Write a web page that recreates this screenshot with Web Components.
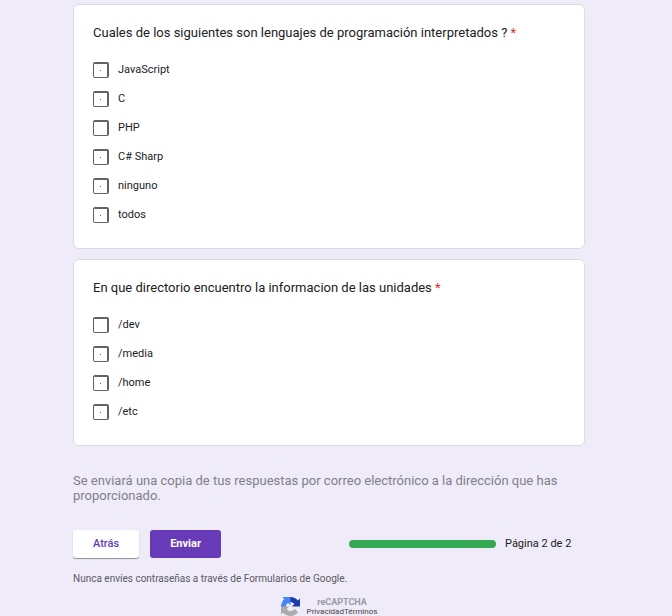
<!DOCTYPE html>
<html lang="es">
<head>
<meta charset="utf-8">
<title>Formulario</title>
<style>
body{margin:0;background:#efebf8;font-family:Roboto,"Liberation Sans",sans-serif;color:#202124}
</style>
</head>
<body>
<form-page>
<question-card label="Cuales de los siguientes son lenguajes de programación interpretados ?">
<check-option dot label="JavaScript"></check-option>
<check-option dot label="C"></check-option>
<check-option label="PHP"></check-option>
<check-option dot label="C# Sharp"></check-option>
<check-option dot label="ninguno"></check-option>
<check-option dot label="todos"></check-option>
</question-card>
<question-card label="En que directorio encuentro la informacion de las unidades">
<check-option label="/dev"></check-option>
<check-option dot label="/media"></check-option>
<check-option dot label="/home"></check-option>
<check-option dot label="/etc"></check-option>
</question-card>
<form-footer></form-footer>
</form-page>
<script>
const define = (name, html, setup) => customElements.define(name, class extends HTMLElement {
  connectedCallback() {
    if (this.shadowRoot) return;
    const root = this.attachShadow({ mode: 'open' });
    root.innerHTML = html;
    if (setup) setup(this, root);
  }
});

define('form-page', `
<style>
:host{display:block;box-sizing:border-box;padding:4px 14px 0 0}
main{max-width:512px;margin:0 auto;display:flex;flex-direction:column;gap:10px}
</style>
<main><slot></slot></main>`);

define('question-card', `
<style>
:host{display:block;background:#fff;border:1px solid #dadce0;border-radius:6px;padding:18px 19px 19px}
fieldset{border:0;margin:0;padding:0;min-width:0}
legend{padding:0;margin:0 0 12px;font-size:13px;line-height:20px}
legend span:last-child{color:#d93025}
</style>
<fieldset><legend><span class="title"></span> <span>*</span></legend><slot></slot></fieldset>`,
(el, root) => { root.querySelector('.title').textContent = el.getAttribute('label'); });

define('check-option', `
<style>
:host{display:block}
label{display:flex;align-items:center;gap:9px;height:29px;font-size:11px;line-height:16px}
input{appearance:none;box-sizing:border-box;flex:none;width:16px;height:16px;margin:0;border:solid #5f6368;border-width:2px 2px 1px 1px;border-radius:2px;display:grid;place-items:center}
:host([dot]) input::before{content:"";width:1px;height:1px;background:#5f6368}
</style>
<label><input type="checkbox"><span></span></label>`,
(el, root) => { root.querySelector('span').textContent = el.getAttribute('label'); });

define('page-progress', `
<style>
:host{display:flex;align-items:center;gap:9px;font-size:11px;line-height:16px}
.bar{width:147px;height:8px;border-radius:4px;background:#34a853}
span{min-width:70px}
</style>
<div class="bar" role="progressbar" aria-label="Progreso" aria-valuenow="2" aria-valuemax="2"></div><span>Página 2 de 2</span>`);

define('recaptcha-badge', `
<style>
:host{display:flex;justify-content:center;gap:7px}
svg{width:19px;height:19px}
div{display:flex;flex-direction:column;align-items:center}
b{font-size:9px;line-height:11px;font-weight:700;color:#9b9ba3}
nav{display:flex;font-size:8px;line-height:8px}
a{color:#444;text-decoration:none}
</style>
<svg viewBox="0 0 64 64" aria-hidden="true">
<path fill="#1c3aa9" d="M64 31.955l-.033-1.37V4.687l-7.16 7.16C50.948 4.674 42.033.093 32.05.093c-10.4 0-19.622 4.96-25.458 12.64l11.736 11.86a15.55 15.55 0 0 1 4.754-5.334c2.05-1.6 4.952-2.906 8.968-2.906.485 0 .86.057 1.135.163 4.976.393 9.288 3.14 11.828 7.124l-8.307 8.307L64 31.953"/>
<path fill="#4285f4" d="M31.862.094l-1.37.033H4.594l7.16 7.16C4.58 13.147 0 22.06 0 32.046c0 10.4 4.96 19.622 12.64 25.458L24.5 45.768a15.55 15.55 0 0 1-5.334-4.754c-1.6-2.05-2.906-4.952-2.906-8.968 0-.485.057-.86.163-1.135.393-4.976 3.14-9.288 7.124-11.828l8.307 8.307L31.86.095"/>
<path fill="#ababab" d="M.001 32.045l.033 1.37v25.898l7.16-7.16c5.86 7.173 14.774 11.754 24.76 11.754 10.4 0 19.622-4.96 25.458-12.64l-11.736-11.86a15.55 15.55 0 0 1-4.754 5.334c-2.05 1.6-4.952 2.906-8.968 2.906-.485 0-.86-.057-1.135-.163-4.976-.393-9.288-3.14-11.828-7.124l8.307-8.307L0 32.047"/>
</svg>
<div><b>reCAPTCHA</b><nav><a href="#privacidad">Privacidad</a><a href="#terminos">Términos</a></nav></div>`);

define('form-footer', `
<style>
:host{display:block;padding-top:17px}
p{margin:0}
.copy{font-size:13px;line-height:15px;color:#80808a}
.row{display:flex;align-items:center;gap:11px;margin:27px 10px 15px 0}
button{font:500 11px/16px Roboto,sans-serif;height:28px;padding:0 20px;border:0;border-radius:3px;background:#fff;color:#673ab7;box-shadow:0 1px 1px #0006}
button.main{background:#673ab7;color:#fff;font-weight:700;box-shadow:none}
page-progress{margin-left:auto}
.note{font-size:10px;line-height:12px;color:#5b5a63;margin-bottom:12px}
</style>
<p class="copy">Se enviará una copia de tus respuestas por correo electrónico a la dirección que has proporcionado.</p>
<div class="row"><button type="button">Atrás</button><button type="button" class="main">Enviar</button><page-progress></page-progress></div>
<p class="note">Nunca envíes contraseñas a través de Formularios de Google.</p>
<recaptcha-badge></recaptcha-badge>`);
</script>
</body>
</html>
